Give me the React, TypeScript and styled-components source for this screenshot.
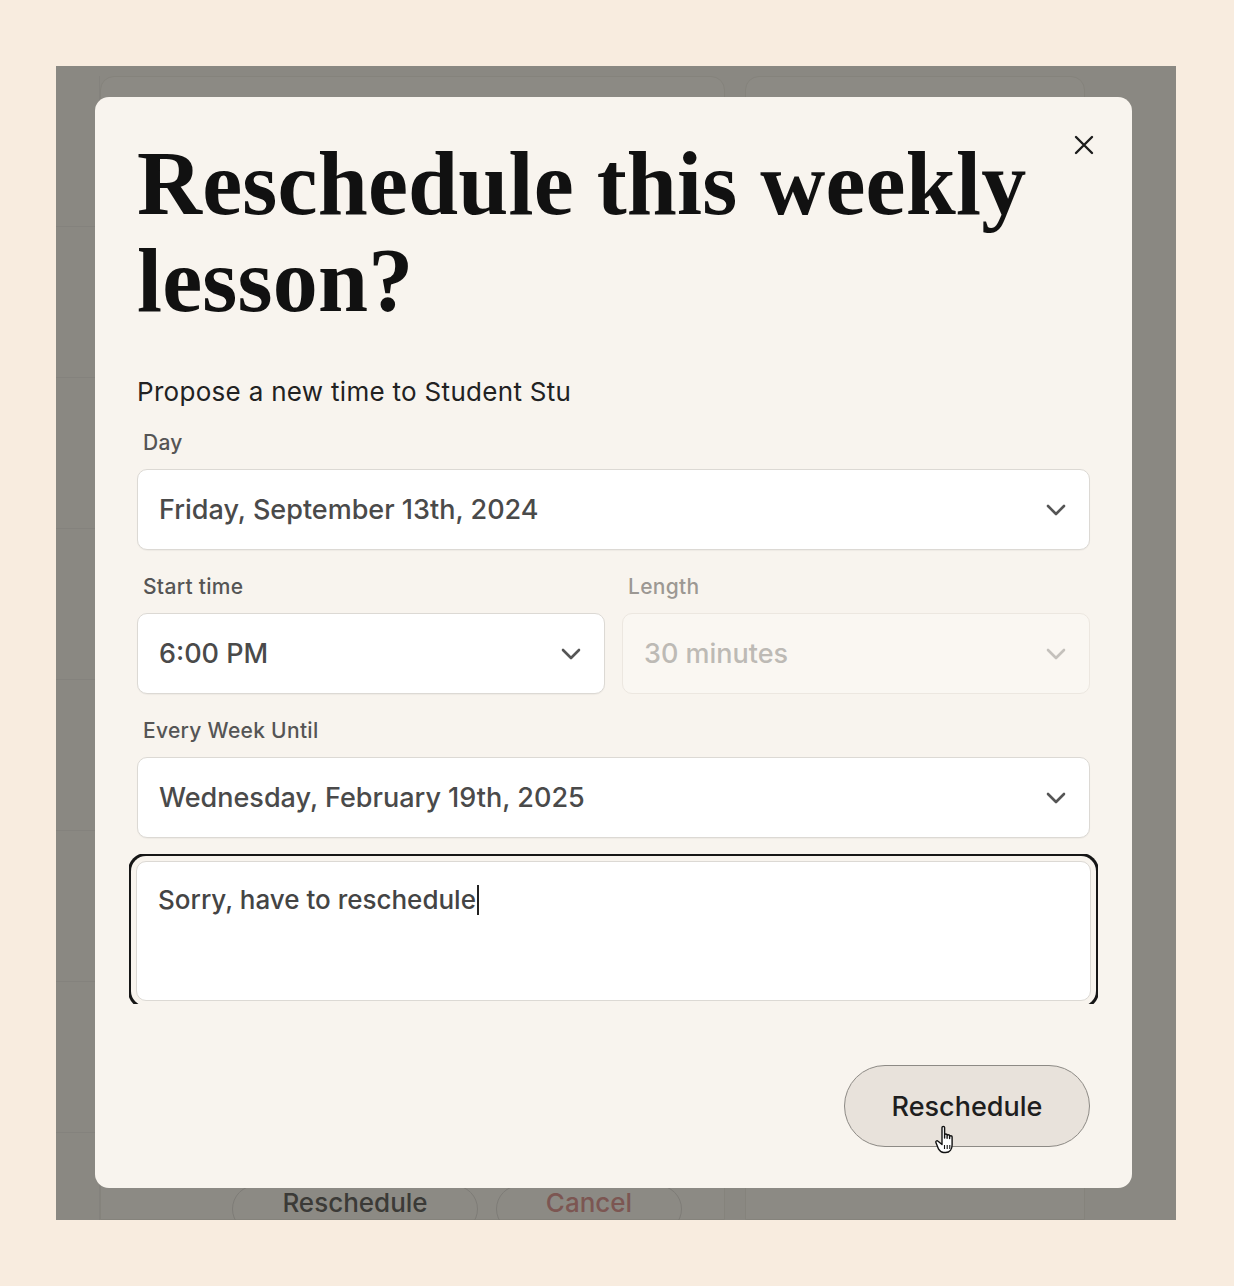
import styled, { createGlobalStyle } from "styled-components";

const GlobalStyle = createGlobalStyle`
    html, body {
        margin: 0;
        padding: 0;
        background: #f8ecdf;
    }
    * {
        box-sizing: border-box;
    }
`;

const Page = styled.div`
    width: 1234px;
    height: 1286px;
    padding: 66px 58px 0 56px;
    font-family: Inter, "Liberation Sans", sans-serif;
`;

const Screen = styled.div`
    position: relative;
    width: 1120px;
    height: 1154px;
    overflow: hidden;
    background: #8a8882;
`;

/* dimmed app behind the dialog */
const BackApp = styled.div`
    display: grid;
    grid-template-columns: 44px 625px 20px 340px 1fr;
    grid-template-rows: 1fr 34px;
    height: 100%;
    padding-top: 10px;
`;

const Rail = styled.div`
    grid-row: 1 / 3;
    border-right: 1px solid #84827d;
    background: repeating-linear-gradient(
        to bottom,
        transparent 0,
        transparent 150px,
        #84827d 150px,
        #84827d 151px
    );
`;

const BackCard = styled.div<{ $col: number }>`
    grid-column: ${(p) => p.$col};
    grid-row: 1 / 3;
    border-radius: 14px 14px 0 0;
    background: #8c8a84;
    border: 1px solid #85837c;
    display: flex;
    flex-direction: column;
    justify-content: flex-end;
`;

const BackActions = styled.div`
    display: flex;
    gap: 18px;
    padding-left: 131px;
    margin-bottom: -14px;
`;

const GhostButton = styled.div<{ $w: number; $tone: string }>`
    width: ${(p) => p.$w}px;
    height: 48px;
    border: 1px solid #7e7c77;
    border-radius: 24px;
    display: flex;
    justify-content: center;
    padding-top: 2px;
    font-size: 26px;
    line-height: 30px;
    font-weight: 500;
    color: ${(p) => p.$tone};
`;

const Overlay = styled.div`
    position: absolute;
    inset: 0;
    padding: 31px 0 0 39px;
`;

const Modal = styled.div`
    position: relative;
    width: 1037px;
    height: 1091px;
    background: #f8f4ee;
    border-radius: 14px;
    padding: 38px 42px 41px 42px;
    display: flex;
    flex-direction: column;
`;

const CloseButton = styled.button`
    position: absolute;
    top: 37px;
    right: 37px;
    width: 22px;
    height: 22px;
    padding: 0;
    border: 0;
    background: none;
    color: #1c1c1c;
    display: flex;
    align-items: center;
    justify-content: center;
`;

const Title = styled.h1`
    margin: 0;
    width: 940px;
    font-family: "Liberation Serif", "DejaVu Serif", serif;
    font-weight: 700;
    font-size: 90px;
    line-height: 97px;
    letter-spacing: 0.2px;
    color: #111;
`;

const Lead = styled.p`
    margin: 47px 0 0 0;
    font-size: 26px;
    line-height: 31px;
    letter-spacing: 0.3px;
    color: #222;
`;

const Fields = styled.div`
    display: flex;
    flex-direction: column;
    gap: 24px;
    margin-top: 23px;
`;

const Row = styled.div`
    display: grid;
    grid-template-columns: 1fr 1fr;
    gap: 17px;
`;

const Field = styled.div`
    display: flex;
    flex-direction: column;
    gap: 14px;
`;

const Label = styled.label<{ $muted?: boolean }>`
    padding-left: 6px;
    font-size: 21px;
    line-height: 25px;
    letter-spacing: 0.3px;
    font-weight: 500;
    color: ${(p) => (p.$muted ? "#9c9893" : "#555")};
`;

const SelectBox = styled.div<{ $disabled?: boolean }>`
    height: 81px;
    display: flex;
    align-items: center;
    justify-content: space-between;
    padding: 0 23px 0 21px;
    border-radius: 10px;
    border: 1px solid ${(p) => (p.$disabled ? "#ece7e0" : "#dcd9d4")};
    background: ${(p) => (p.$disabled ? "#faf7f2" : "#fff")};
    font-size: 27px;
    font-weight: 500;
    color: ${(p) => (p.$disabled ? "#bdbab5" : "#4a4a4a")};
    box-shadow: ${(p) => (p.$disabled ? "none" : "0 1px 1px rgba(0,0,0,0.04)")};
`;

const NoteClip = styled.div`
    margin: 16px -8px 0 -8px;
    padding: 7px 7px 0 7px;
    height: 150px;
    overflow: hidden;
`;

const NoteBox = styled.div`
    height: 140px;
    border-radius: 10px;
    border: 1px solid #dcd9d4;
    background: #fff;
    padding: 22px 21px;
    font-size: 26px;
    font-weight: 500;
    color: #444;
    box-shadow: 0 0 0 5px #f8f4ee, 0 0 0 8px #161616;
`;

const Caret = styled.span`
    display: inline-block;
    width: 2px;
    height: 30px;
    margin-left: 1px;
    vertical-align: -6px;
    background: #222;
`;

const Footer = styled.div`
    margin-top: auto;
    display: flex;
    justify-content: flex-end;
`;

const PrimaryButton = styled.button`
    position: relative;
    width: 246px;
    height: 82px;
    border-radius: 41px;
    border: 1.5px solid #8d8a85;
    background: #e8e2db;
    font-family: Inter, "Liberation Sans", sans-serif;
    font-size: 27px;
    font-weight: 500;
    color: #1e1e1e;
`;

const Pointer = styled.svg`
    position: absolute;
    left: 88px;
    top: 58px;
`;

function Chevron({ color }: { color: string }) {
    return (
        <svg width="20" height="12" viewBox="0 0 20 12">
            <polyline
                points="2,2 10,10 18,2"
                fill="none"
                stroke={color}
                strokeWidth="2.6"
                strokeLinecap="round"
                strokeLinejoin="round"
            />
        </svg>
    );
}

function Select({ value, disabled }: { value: string; disabled?: boolean }) {
    return (
        <SelectBox $disabled={disabled}>
            <span>{value}</span>
            <Chevron color={disabled ? "#c4c1bc" : "#555"} />
        </SelectBox>
    );
}

function HandCursor() {
    return (
        <Pointer width="30" height="34" viewBox="0 0 30 34">
            <path
                d="M9 3.5c0-1.5 2.6-1.5 2.6 0V14l0-3c0-1.4 2.5-1.4 2.5 0v3.2l0-2.4c0-1.4 2.5-1.4 2.5 0v2.8l0-1.8c0-1.4 2.5-1.4 2.5 0V21c0 4-2.3 7.5-6.5 7.5h-2c-2.5 0-3.8-1.4-5-3.3L3 18.8c-0.8-1.4 0.9-2.7 2.1-1.6L9 20.5z"
                fill="#fff"
                stroke="#111"
                strokeWidth="1.4"
                strokeLinejoin="round"
            />
            <path d="M11.5 21v4M14.2 21v4M16.8 21v4" stroke="#111" strokeWidth="1.1" />
        </Pointer>
    );
}

export default function App() {
    return (
        <Page>
            <GlobalStyle />
            <Screen>
                <BackApp>
                    <Rail />
                    <BackCard $col={2}>
                        <BackActions>
                            <GhostButton $w={246} $tone="#3b3a37">Reschedule</GhostButton>
                            <GhostButton $w={186} $tone="#7c5652">Cancel</GhostButton>
                        </BackActions>
                    </BackCard>
                    <BackCard $col={4} />
                </BackApp>

                <Overlay>
                    <Modal>
                        <CloseButton aria-label="Close">
                            <svg width="20" height="20" viewBox="0 0 20 20">
                                <path
                                    d="M2 2L18 18M18 2L2 18"
                                    stroke="currentColor"
                                    strokeWidth="2.4"
                                    strokeLinecap="round"
                                />
                            </svg>
                        </CloseButton>

                        <Title>Reschedule this weekly lesson?</Title>
                        <Lead>Propose a new time to Student Stu</Lead>

                        <Fields>
                            <Field>
                                <Label>Day</Label>
                                <Select value="Friday, September 13th, 2024" />
                            </Field>
                            <Row>
                                <Field>
                                    <Label>Start time</Label>
                                    <Select value="6:00 PM" />
                                </Field>
                                <Field>
                                    <Label $muted>Length</Label>
                                    <Select value="30 minutes" disabled />
                                </Field>
                            </Row>
                            <Field>
                                <Label>Every Week Until</Label>
                                <Select value="Wednesday, February 19th, 2025" />
                            </Field>
                        </Fields>

                        <NoteClip>
                            <NoteBox>
                                Sorry, have to reschedule<Caret />
                            </NoteBox>
                        </NoteClip>

                        <Footer>
                            <PrimaryButton>
                                Reschedule
                                <HandCursor />
                            </PrimaryButton>
                        </Footer>
                    </Modal>
                </Overlay>
            </Screen>
        </Page>
    );
}
